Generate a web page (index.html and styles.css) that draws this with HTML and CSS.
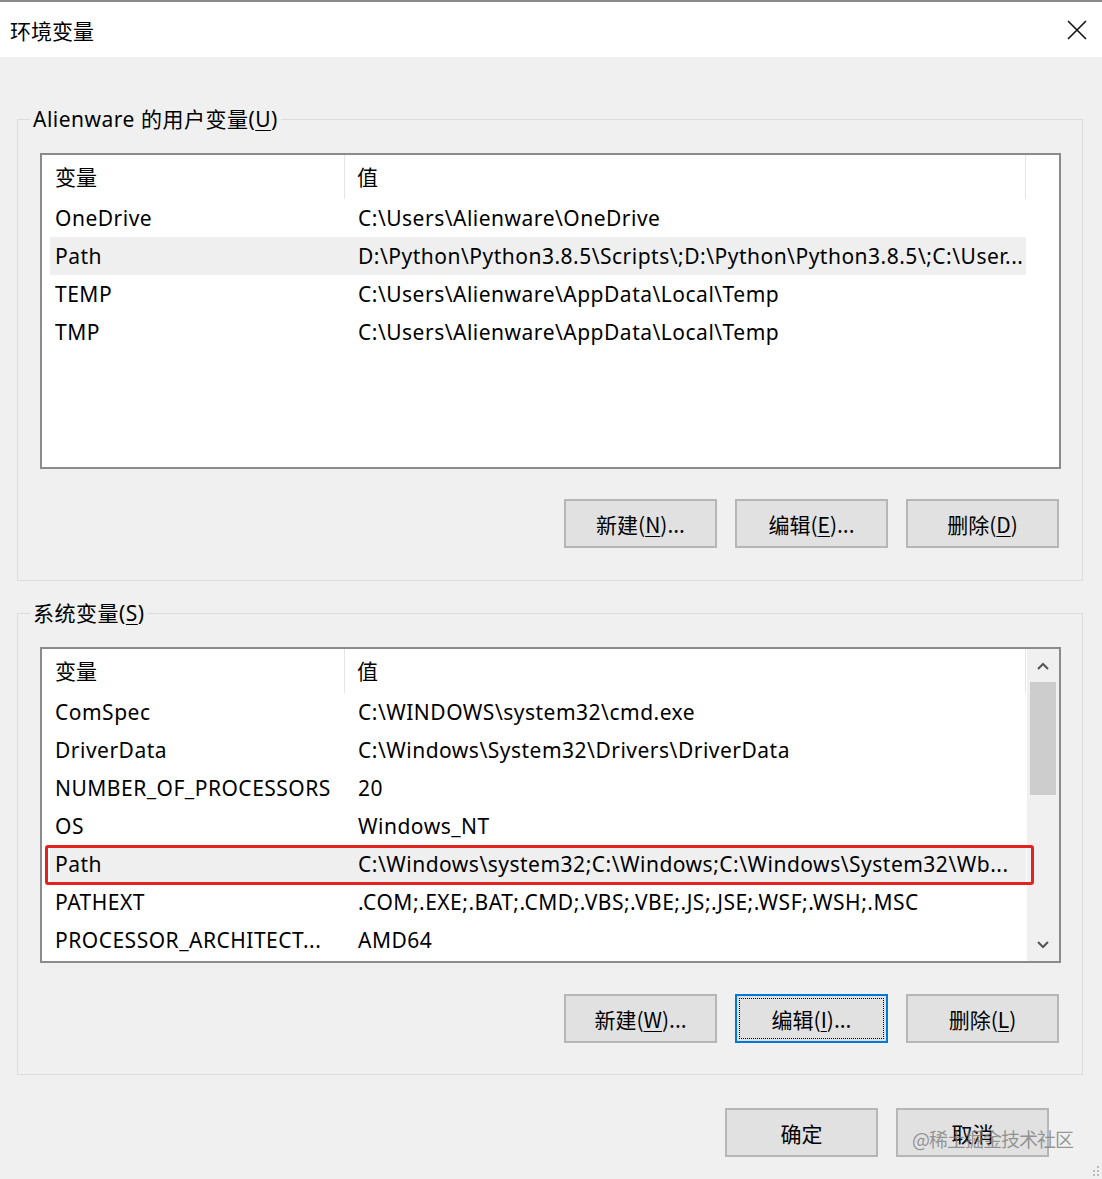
FILE: index.html
```html
<!DOCTYPE html>
<html>
    <head>
        <title>环境变量</title>
        <meta charset="utf-8">
        <link rel="stylesheet" href="styles.css">
    </head>
    <body>
        <div class="dialog">
            <div class="titlebar">
                <span class="title">环境变量</span>
                <svg class="close" width="20" height="20" viewBox="0 0 20 20">
                    <path d="M1 1 L19 19 M19 1 L1 19" stroke="#111" stroke-width="1.6" fill="none"/>
                </svg>
            </div>

            <div class="content">
                <fieldset class="group">
                    <legend>Alienware 的用户变量(<u>U</u>)</legend>
                    <div class="list">
                        <div class="list-main">
                            <div class="list-head">
                                <div class="col">变量</div>
                                <div class="col">值</div>
                            </div>
                            <div class="row"><span>OneDrive</span><span>C:\Users\Alienware\OneDrive</span></div>
                            <div class="row selected"><span>Path</span><span>D:\Python\Python3.8.5\Scripts\;D:\Python\Python3.8.5\;C:\User...</span></div>
                            <div class="row"><span>TEMP</span><span>C:\Users\Alienware\AppData\Local\Temp</span></div>
                            <div class="row"><span>TMP</span><span>C:\Users\Alienware\AppData\Local\Temp</span></div>
                        </div>
                    </div>
                    <div class="buttons">
                        <button class="btn">新建(<u>N</u>)...</button>
                        <button class="btn">编辑(<u>E</u>)...</button>
                        <button class="btn">删除(<u>D</u>)</button>
                    </div>
                </fieldset>

                <fieldset class="group second">
                    <legend>系统变量(<u>S</u>)</legend>
                    <div class="list">
                        <div class="list-main">
                            <div class="list-head">
                                <div class="col">变量</div>
                                <div class="col">值</div>
                            </div>
                            <div class="row"><span>ComSpec</span><span>C:\WINDOWS\system32\cmd.exe</span></div>
                            <div class="row"><span>DriverData</span><span>C:\Windows\System32\Drivers\DriverData</span></div>
                            <div class="row"><span>NUMBER_OF_PROCESSORS</span><span>20</span></div>
                            <div class="row"><span>OS</span><span>Windows_NT</span></div>
                            <div class="row selected marked"><span>Path</span><span>C:\Windows\system32;C:\Windows;C:\Windows\System32\Wb...</span></div>
                            <div class="row"><span>PATHEXT</span><span>.COM;.EXE;.BAT;.CMD;.VBS;.VBE;.JS;.JSE;.WSF;.WSH;.MSC</span></div>
                            <div class="row"><span>PROCESSOR_ARCHITECT...</span><span>AMD64</span></div>
                        </div>
                        <div class="scrollbar">
                            <svg class="arrow" width="14" height="10" viewBox="0 0 14 10">
                                <path d="M2 8 L7 3 L12 8" stroke="#555" stroke-width="2" fill="none"/>
                            </svg>
                            <div class="thumb"></div>
                            <div class="track"></div>
                            <svg class="arrow" width="14" height="10" viewBox="0 0 14 10">
                                <path d="M2 2 L7 7 L12 2" stroke="#555" stroke-width="2" fill="none"/>
                            </svg>
                        </div>
                    </div>
                    <div class="buttons bottom-set">
                        <button class="btn">新建(<u>W</u>)...</button>
                        <button class="btn focused"><span class="focus-ring">编辑(<u>I</u>)...</span></button>
                        <button class="btn">删除(<u>L</u>)</button>
                    </div>
                </fieldset>

                <div class="footer">
                    <button class="btn">确定</button>
                    <button class="btn">取消</button>
                </div>

                <span class="watermark">@稀土掘金技术社区</span>
                <svg class="grip" width="10" height="12" viewBox="0 0 10 12">
                    <rect x="7" y="1" width="2" height="2" fill="#bbb"/>
                    <rect x="7" y="5" width="2" height="2" fill="#bbb"/>
                    <rect x="3" y="5" width="2" height="2" fill="#bbb"/>
                    <rect x="7" y="9" width="2" height="2" fill="#bbb"/>
                    <rect x="3" y="9" width="2" height="2" fill="#bbb"/>
                </svg>
            </div>
        </div>
    </body>
</html>
```

FILE: styles.css
```css
body {
    margin: 0;
    background-color: #f0f0f0;
    font-family: "Noto Sans", "Noto Sans CJK SC", sans-serif;
    font-size: 21px;
    color: #000;
}

.dialog {
    width: 1102px;
    height: 1179px;
    border-top: 2px solid #8a8a8a;
    box-sizing: border-box;
    display: flex;
    flex-direction: column;
}

.titlebar {
    height: 55px;
    background-color: #fff;
    display: flex;
    align-items: center;
    justify-content: space-between;
    padding: 0 15px 0 10px;
    flex-shrink: 0;
}

.title {
    font-family: "Noto Sans CJK SC", sans-serif;
    font-size: 21px;
}

.content {
    position: relative;
    flex: 1;
    padding: 48px 19px 0 17px;
}

/* group boxes */
.group {
    margin: 0;
    border: 1px solid #dcdcdc;
    padding: 20px 21px 32px 22px;
}

.group.second {
    margin-top: 18px;
    padding-bottom: 31px;
}

.group legend {
    margin-left: -10px;
    padding: 0 3px;
    line-height: 28px;
    height: 28px;
    letter-spacing: 0.5px;
}

u {
    text-decoration-thickness: 1px;
    text-underline-offset: 3px;
}

/* list view */
.list {
    height: 316px;
    box-sizing: border-box;
    border: 2px solid #8b8b8b;
    background-color: #fff;
    display: flex;
}

.list-main {
    width: 984px;
}

.list-head,
.row {
    display: grid;
    grid-template-columns: 295px 681px;
    margin-left: 8px;
}

.list-head {
    height: 44px;
    line-height: 42px;
}

.list-head .col {
    border-right: 1px solid #e5e5e5;
    padding-left: 5px;
    font-family: "Noto Sans CJK SC", sans-serif;
}

.list-head .col + .col {
    padding-left: 12px;
}

.row {
    position: relative;
    height: 38px;
    line-height: 38px;
    white-space: nowrap;
    letter-spacing: 0.5px;
}

.row span {
    overflow: hidden;
    padding-left: 5px;
}

.row span + span {
    padding-left: 13px;
}

.row.selected {
    background-color: #efefef;
}

.row.marked::after {
    content: "";
    position: absolute;
    left: -5px;
    right: -8px;
    top: 0;
    bottom: -2px;
    border: 3px solid #e3231f;
    border-radius: 3px;
}

.scrollbar {
    width: 32px;
    margin-left: auto;
    background-color: #f0f0f0;
    display: flex;
    flex-direction: column;
    align-items: center;
}

.scrollbar .arrow {
    margin: 12px 0 11px;
}

.scrollbar .thumb {
    width: 26px;
    height: 113px;
    background-color: #cdcdcd;
}

.scrollbar .track {
    flex: 1;
}

/* buttons */
.buttons,
.footer {
    display: flex;
    justify-content: flex-end;
    gap: 18px;
}

.buttons {
    margin-top: 30px;
    padding-right: 2px;
}

.buttons.bottom-set {
    margin-top: 31px;
}

.footer {
    margin-top: 33px;
    padding-right: 34px;
}

.btn {
    width: 153px;
    height: 49px;
    box-sizing: border-box;
    background-color: #e1e1e1;
    border: 2px solid #b6b6b6;
    font-family: "Noto Sans CJK SC", sans-serif;
    font-size: 21px;
    color: #000;
    padding: 0;
}

.btn.focused {
    border-color: #0078d7;
    padding: 2px;
}

.focus-ring {
    display: flex;
    align-items: center;
    justify-content: center;
    height: 100%;
    border: 1px dotted #000;
    box-sizing: border-box;
}

.watermark {
    position: absolute;
    left: 912px;
    top: 1068px;
    font-family: "Noto Sans CJK SC", sans-serif;
    font-size: 19px;
    color: rgba(120, 120, 120, 0.75);
    letter-spacing: -1px;
}

.grip {
    position: absolute;
    right: 2px;
    bottom: 2px;
}
```
